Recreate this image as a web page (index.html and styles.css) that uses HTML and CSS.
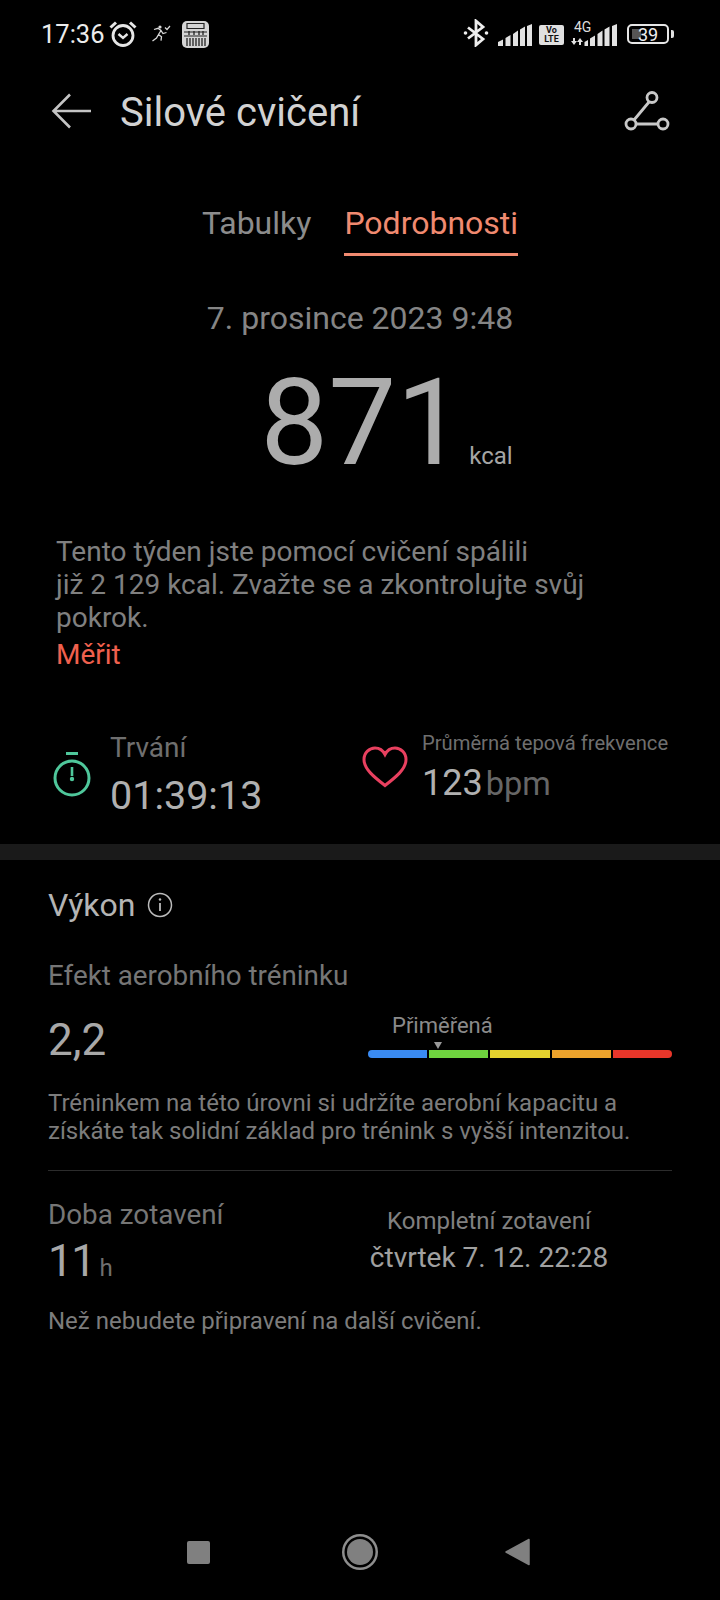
FILE: index.html
```html
<!DOCTYPE html>
<html lang="cs">
<head>
<meta charset="utf-8">
<title>Silové cvičení</title>
<link rel="stylesheet" href="styles.css">
</head>
<body>
<div class="screen">
  <div class="status">
    <div class="status-left">
      <span class="time">17:36</span>
      <svg class="ic-alarm" width="28" height="28" viewBox="0 0 28 28" fill="none" stroke="#e6e6e6"><circle cx="14" cy="15.500" r="10" stroke-width="2.800"/><path d="M9.500 14l4.500 4 4.500-4" stroke-width="2.400"/><path d="M1.500 7.500L7 2.500M26.500 7.500L21 2.500" stroke-width="3"/></svg>
      <svg class="ic-run" width="20" height="20" viewBox="0 0 20 20" fill="none" stroke="#d8d8d8" stroke-width="1.300"><circle cx="9" cy="3" r="1.600" fill="#d8d8d8" stroke="none"/><path d="M3 5.500l4-1.200 3 2.200-2.500 4 3 2.200-.5 4M7.500 10.500L5.500 14 1.500 17M10 6.500l2 3 3.500-1"/><path d="M14 3.500l2 2 3-3.500" stroke-width="1.200"/></svg>
      <svg class="ic-cal" width="27" height="27" viewBox="0 0 27 27"><rect width="27" height="27" rx="5" fill="#d4d4d4"/><path d="M5 2.500h17v5H5zM2 11h23M2 15h23" fill="none" stroke="#222" stroke-width="1.200"/><path d="M5 17v8M8 17v8M11 17v8M14 17v8M17 17v8M20 17v8M23 17v8M7 10v4M12 10v4M17 10v4M21 10v4" stroke="#222" stroke-width="1.300"/></svg>
    </div>
    <div class="status-right">
      <svg class="ic-bt" width="26" height="28" viewBox="0 0 26 28" fill="none" stroke="#eee" stroke-width="2.800"><path d="M5 8.500l15 11.500-7 6V2l7 6L5 19.500"/><circle cx="2.500" cy="14" r="1.800" fill="#eee" stroke="none"/><circle cx="23.500" cy="14" r="1.800" fill="#eee" stroke="none"/></svg>
      <svg class="ic-signal" width="34" height="22" viewBox="0 0 34 22" fill="#e2e2e2"><path d="M0 18l5-2.500V22H0zM7.500 14l5-3V22h-5zM15 10l5-3.500V22h-5zM22 5.500l5-3V22h-5zM29 2l5-2V22h-5z"/></svg>
      <span class="volte">Vo<br>LTE</span>
      <div class="net">
        <span class="net-label">4G</span>
        <svg width="46" height="22" viewBox="0 0 46 22" fill="#e2e2e2"><path d="M2 14h2v3h2l-3 4-3-4h2zM8 21h2v-3h2l-3-4-3 4h2z"/><path d="M13.500 18l3.500-2v6h-3.500zM19 14.500l5-3V22h-5zM26.500 10l5-3.500V22h-5zM33.500 5.500l5-3V22h-5zM41 2l5-2V22h-5z"/></svg>
      </div>
      <div class="battery"><span class="battery-fill"></span><span class="battery-num">39</span></div>
      <span class="battery-tip"></span>
    </div>
  </div>

  <header class="appbar">
    <svg class="back" width="40" height="36" viewBox="0 0 40 36" fill="none" stroke="#c4c4c4" stroke-width="2.600"><path d="M19 1.500L2.500 18 19 34.500M2.500 18H40"/></svg>
    <h1 class="title">Silové cvičení</h1>
    <svg class="share" width="46" height="40" viewBox="0 0 46 40" fill="none" stroke="#c8c8c8" stroke-width="2.800"><circle cx="28" cy="6.500" r="5"/><circle cx="7" cy="33" r="5"/><circle cx="39" cy="33" r="5"/><path d="M25 11L10 29M12 33h22"/></svg>
  </header>

  <nav class="tabs">
    <span class="tab">Tabulky</span>
    <span class="tab tab-active">Podrobnosti</span>
  </nav>

  <div class="date">7. prosince 2023 9:48</div>
  <div class="kcal-row"><span class="kcal-num">871</span><span class="kcal-unit">kcal</span></div>

  <p class="summary">Tento týden jste pomocí cvičení spálili<br>již 2 129 kcal. Zvažte se a zkontrolujte svůj<br>pokrok.</p>
  <div class="measure">Měřit</div>

  <div class="stats">
    <div class="stat stat-time">
      <svg class="ic-watch" width="38" height="45" viewBox="0 0 38 45" fill="none" stroke="#4fc79b" stroke-width="3"><path d="M13 1.500h12"/><circle cx="19" cy="26" r="17"/><path d="M19 15v9" stroke-width="2.600"/><circle cx="19" cy="27" r="2.200" fill="#4fc79b" stroke="none"/></svg>
      <div class="stat-text">
        <div class="stat-label">Trvání</div>
        <div class="stat-value">01:39:13</div>
      </div>
    </div>
    <div class="stat stat-hr">
      <svg class="ic-heart" width="46" height="42" viewBox="0 0 46 42" fill="none" stroke="#e8405f" stroke-width="3"><path d="M23 39.500C12 31 2 23 2 13.500 2 6.500 7.500 2 13 2c4.500 0 8 2.500 10 6.500C25 4.500 28.500 2 33 2c5.500 0 11 4.500 11 11.500C44 23 34 31 23 39.500z"/></svg>
      <div class="stat-text">
        <div class="stat-label-small">Průměrná tepová frekvence</div>
        <div class="hr-row"><span class="hr-value">123</span><span class="hr-unit">bpm</span></div>
      </div>
    </div>
  </div>

  <div class="divider"></div>

  <section class="perf">
    <div class="perf-head">
      <h2 class="perf-title">Výkon</h2>
      <svg width="26" height="26" viewBox="0 0 26 26" fill="none" stroke="#bbb" stroke-width="1.500"><circle cx="13" cy="13" r="11.500"/><path d="M13 11v8" stroke-width="1.800"/><circle cx="13" cy="7.500" r="1.200" fill="#bbb" stroke="none"/></svg>
    </div>
    <div class="sub-title">Efekt aerobního tréninku</div>
    <div class="effect-row">
      <span class="big-num">2,2</span>
      <div class="scale">
        <div class="scale-label">Přiměřená</div>
        <div class="scale-arrow"></div>
        <div class="scale-bar">
          <span class="seg seg-blue"></span>
          <span class="seg seg-green"></span>
          <span class="seg seg-yellow"></span>
          <span class="seg seg-orange"></span>
          <span class="seg seg-red"></span>
        </div>
      </div>
    </div>
    <p class="note">Tréninkem na této úrovni si udržíte aerobní kapacitu a<br>získáte tak solidní základ pro trénink s vyšší intenzitou.</p>
    <div class="rule"></div>
    <div class="recovery">
      <div class="rec-left">
        <div class="sub-title rec-title">Doba zotavení</div>
        <div class="rec-value"><span class="big-num rec-num">11</span><span class="rec-unit">h</span></div>
      </div>
      <div class="rec-right">
        <div class="rec-label">Kompletní zotavení</div>
        <div class="rec-date">čtvrtek 7. 12. 22:28</div>
      </div>
    </div>
    <p class="note note-last">Než nebudete připravení na další cvičení.</p>
  </section>

  <footer class="navbar">
    <span class="nav-square"></span>
    <span class="nav-circle"></span>
    <svg width="26" height="28" viewBox="0 0 26 28"><path d="M1 14L24 1.500v25z" fill="#808080" stroke="#808080" stroke-width="1.500" stroke-linejoin="round"/></svg>
  </footer>
</div>
</body>
</html>
```
FILE: styles.css
```css
* { box-sizing: border-box; }
html, body { margin: 0; padding: 0; background: #000; }
body { font-family: Roboto, "Noto Sans", sans-serif; color: #aaa; }
p, h1, h2 { margin: 0; font-weight: 400; }
.screen { width: 720px; height: 1600px; display: flex; flex-direction: column; overflow: hidden; background: #000; }

.status { height: 70px; padding: 20px 46px 0 41px; display: flex; justify-content: space-between; align-items: flex-start; }
.status-left { display: flex; align-items: center; gap: 4px; height: 28px; }
.time { font-size: 25.500px; color: #ececec; line-height: 28px; }
.ic-run { margin-left: 10px; }
.ic-cal { margin-left: 7px; }
.status-right { display: flex; align-items: flex-end; height: 26px; gap: 7px; position: relative; }
.ic-bt { margin-bottom: -1px; }
.ic-signal { margin-left: 2px; }
.volte { width: 25px; height: 20px; margin-bottom: 1px; background: #e0e0e0; color: #111; font-size: 9px; font-weight: 700; line-height: 9px; text-align: center; border-radius: 2px; padding-top: 1px; }
.net { position: relative; }
.net-label { position: absolute; left: 3px; top: -3px; font-size: 14px; color: #ddd; line-height: 12px; }
.net svg { display: block; }
.battery { width: 42px; height: 20px; margin-bottom: 2px; margin-left: 3px; border: 2.500px solid #e6e6e6; border-radius: 5px; position: relative; display: flex; align-items: center; justify-content: center; }
.battery-fill { position: absolute; left: 3px; top: 3px; bottom: 3px; width: 9px; background: #555; }
.battery-num { position: relative; font-size: 18px; line-height: 15px; color: #eee; }
.battery-tip { width: 3px; height: 8px; background: #e0e0e0; margin-left: -5px; margin-bottom: 8px; border-radius: 0 2px 2px 0; }

.appbar { height: 82px; padding: 0 50px 0 51px; display: flex; align-items: center; }
.title { font-size: 40px; color: #d2d2d2; margin-left: 29px; margin-top: 3px; flex: 1; }

.tabs { display: flex; justify-content: center; gap: 33px; margin-top: 46px; }
.tab { font-size: 32px; color: #8c8c8c; height: 58px; line-height: 50px; }
.tab-active { color: #f08a70; border-bottom: 3px solid #f08a70; }

.date { text-align: center; font-size: 32px; color: #858585; margin-top: 42px; line-height: 40px; }
.kcal-row { display: flex; justify-content: center; align-items: baseline; margin-top: 25px; height: 120px; padding-left: 53px; }
.kcal-num { font-size: 121px; font-weight: 400; color: #acacac; line-height: 120px; }
.kcal-unit { font-size: 24px; color: #a5a5a5; margin-left: 5px; }

.summary { padding: 0 56px; margin-top: 52px; font-size: 28px; line-height: 33px; color: #808080; }
.measure { padding: 0 56px; margin-top: 2px; font-size: 28px; line-height: 37px; color: #f0604e; }

.stats { display: flex; margin-top: 59px; padding-left: 53px; height: 104px; }
.stat { display: flex; }
.stat-time { width: 309px; align-items: flex-start; }
.ic-watch { margin-top: 20px; }
.stat-time .stat-text { margin-left: 19px; }
.stat-label { font-size: 28px; line-height: 32px; color: #6f6f6f; }
.stat-value { font-size: 39.500px; line-height: 46px; margin-top: 9px; color: #b0b0b0; }
.ic-heart { margin-top: 14px; }
.stat-hr .stat-text { margin-left: 14px; margin-top: -2px; }
.stat-label-small { font-size: 20.200px; line-height: 26px; color: #6f6f6f; }
.hr-row { display: flex; align-items: baseline; margin-top: 5px; }
.hr-value { font-size: 36px; line-height: 44px; color: #b0b0b0; }
.hr-unit { font-size: 32.500px; color: #666; margin-left: 3px; }

.divider { height: 16px; background: #1a1a1a; margin-top: 8px; }

.perf { padding: 0 48px; flex: 1; }
.perf-head { display: flex; align-items: center; gap: 12px; height: 40px; margin-top: 25px; }
.perf-title { font-size: 32px; color: #b4b4b4; }
.sub-title { font-size: 27.800px; color: #767676; line-height: 32px; margin-top: 35px; }
.effect-row { display: flex; justify-content: space-between; margin-top: 23px; height: 64px; }
.big-num { font-size: 44px; line-height: 50px; color: #a8a8a8; }
.scale { width: 304px; margin-top: -2px; }
.scale-label { font-size: 22px; line-height: 26px; color: #8a8a8a; padding-left: 24px; }
.scale-arrow { width: 0; height: 0; margin-left: 66px; margin-top: 3px; border-left: 4.500px solid transparent; border-right: 4.500px solid transparent; border-top: 7px solid #999; }
.scale-bar { display: flex; gap: 2px; margin-top: 1px; height: 8px; border-radius: 4px; overflow: hidden; }
.seg { flex: 1; }
.seg-blue { background: #3a8bf2; }
.seg-green { background: #6fd43f; }
.seg-yellow { background: #e4d22e; }
.seg-orange { background: #eda32c; }
.seg-red { background: #e8362a; }
.note { font-size: 24px; line-height: 28px; color: #7c7c7c; margin-top: 10px; }
.rule { height: 1px; background: #2c2c2c; margin-top: 25px; }
.recovery { display: flex; }
.rec-left { width: 315px; }
.rec-title { margin-top: 28px; }
.rec-value { margin-top: 5px; display: flex; align-items: baseline; }
.rec-num { letter-spacing: -1.500px; }
.rec-unit { font-size: 24px; color: #6f6f6f; margin-left: 5px; }
.rec-right { width: 252px; text-align: center; margin-top: 35px; }
.rec-label { font-size: 24px; line-height: 30px; color: #808080; }
.rec-date { font-size: 28px; line-height: 36px; color: #a0a0a0; margin-top: 4px; }
.note-last { margin-top: 21px; }

.navbar { height: 96px; display: flex; align-items: center; padding: 0 0 0 187px; }
.nav-square { width: 23px; height: 23px; background: #808080; border-radius: 2px; }
.nav-circle { width: 26px; height: 26px; border-radius: 50%; background: #808080; box-shadow: 0 0 0 2.500px #000, 0 0 0 5px #8e8e8e; margin-left: 137px; }
.navbar svg { margin-left: 132px; }
```
